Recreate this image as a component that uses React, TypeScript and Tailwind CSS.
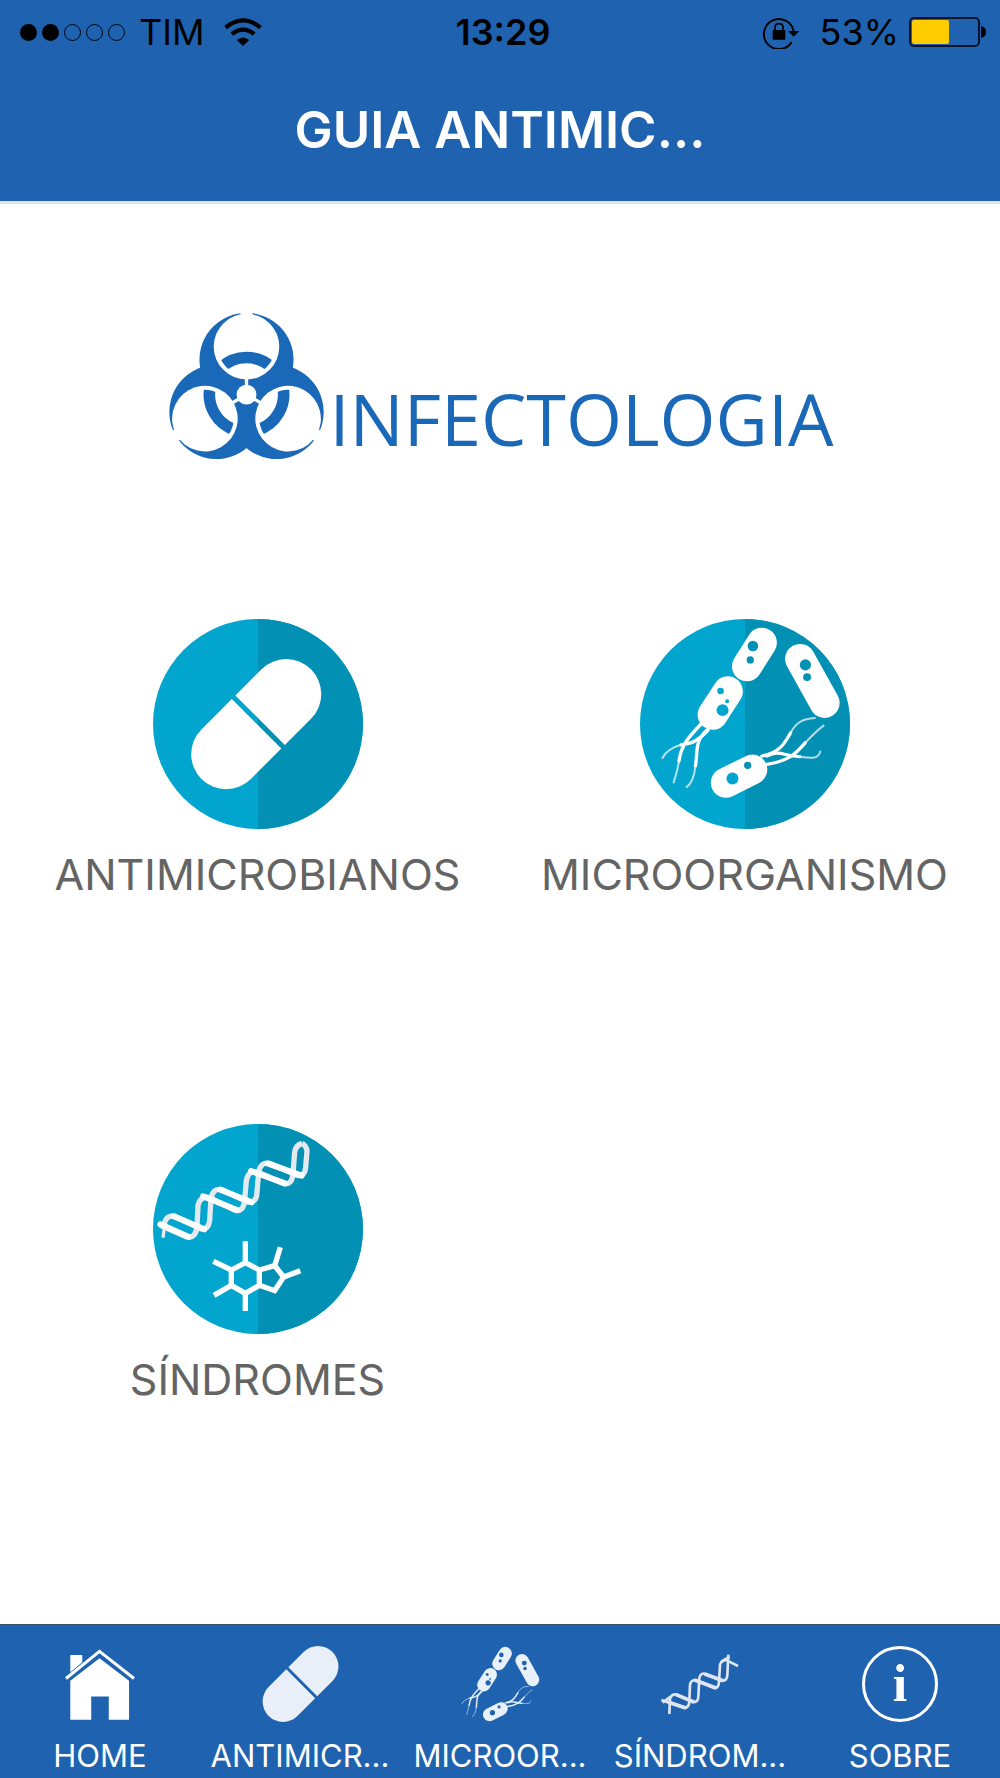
import type { ReactNode } from "react";

const CYAN_LIGHT = "#02a5cd";
const CYAN_DARK = "#0291b4";

function SignalDots() {
  return (
    <div className="flex gap-[5px]" role="img" aria-label="Sinal: 2 de 5">
      {[true, true, false, false, false].map((on, i) => (
        <span
          key={i}
          className={
            on
              ? "size-[17px] rounded-full bg-black"
              : "size-[17px] rounded-full border border-black"
          }
        />
      ))}
    </div>
  );
}

function WifiIcon() {
  return (
    <svg width="38" height="28" viewBox="669 51 116 85" aria-hidden="true">
      <g fill="none" stroke="#000" strokeWidth="13">
        <path d="M674 80 Q700 58 727 58 Q754 58 780 80" />
        <path d="M693 100 Q710 86 727 86 Q744 86 761 100" />
      </g>
      <path d="M727 136 L708 118 Q727 102 746 118 Z" />
    </svg>
  );
}

function RotationLockIcon() {
  return (
    <svg width="38" height="34" viewBox="297 43 112 102" aria-hidden="true">
      <path d="M385 124 A45 45 0 1 1 391 92" fill="none" stroke="#000" strokeWidth="6" />
      <path d="M374 91 H408 L391 108 Z" />
      <rect x="328" y="88" width="38" height="29" rx="2" />
      <path d="M335 90 V80 Q335 69 347 69 Q359 69 359 80 V90" fill="none" stroke="#000" strokeWidth="5" />
    </svg>
  );
}

function BatteryIcon() {
  return (
    <svg width="77" height="30" viewBox="0 0 77 30" aria-hidden="true">
      <rect x="1" y="1" width="69" height="28" rx="4" fill="none" stroke="#06142b" strokeWidth="2" />
      <rect x="3" y="3" width="37" height="24" rx="2" fill="#ffcc00" />
      <path d="M72 9 Q77 10 77 15 Q77 20 72 21 Z" />
    </svg>
  );
}

function StatusBar() {
  return (
    <div className="grid h-16 grid-cols-[1fr_auto_1fr] items-center pr-3.5 pl-5 text-4xl text-black">
      <div className="flex items-center gap-3.5">
        <SignalDots />
        <span>TIM</span>
        <span className="pl-1.5">
          <WifiIcon />
        </span>
      </div>
      <time className="font-semibold">13:29</time>
      <div className="flex items-center justify-end gap-2.5">
        <span className="pr-2.5">
          <RotationLockIcon />
        </span>
        <span>53%</span>
        <BatteryIcon />
      </div>
    </div>
  );
}

function BiohazardIcon() {
  const turns = [0, 120, 240];
  return (
    <svg width="157" height="148" viewBox="48 36 474 446" aria-hidden="true">
      <defs>
        <clipPath id="lobe">
          <circle cx="285" cy="140" r="87" />
        </clipPath>
      </defs>
      {turns.map((a) => (
        <circle key={a} cx="285" cy="180" r="142" fill="#1a68b8" transform={`rotate(${a} 285 285)`} />
      ))}
      {turns.map((a) => (
        <g key={a} transform={`rotate(${a} 285 285)`}>
          <circle cx="285" cy="140" r="99" fill="#fff" />
          <rect x="267" y="30" width="36" height="30" fill="#fff" />
          <rect x="280" y="230" width="10" height="40" fill="#fff" />
        </g>
      ))}
      <circle cx="285" cy="285" r="30" fill="#fff" />
      {turns.map((a) => (
        <g key={a} transform={`rotate(${a} 285 285)`}>
          <circle
            cx="285"
            cy="285"
            r="112"
            fill="none"
            stroke="#1a68b8"
            strokeWidth="35"
            clipPath="url(#lobe)"
          />
        </g>
      ))}
    </svg>
  );
}

function Disc({ viewBox, cx, cy, r, children }: { viewBox: string; cx: number; cy: number; r: number; children: ReactNode }) {
  return (
    <svg className="size-[210px]" viewBox={viewBox} aria-hidden="true">
      <circle cx={cx} cy={cy} r={r} fill={CYAN_LIGHT} />
      <path d={`M${cx} ${cy - r} A${r} ${r} 0 0 1 ${cx} ${cy + r} Z`} fill={CYAN_DARK} />
      {children}
    </svg>
  );
}

function PillShape({ fill }: { fill: string }) {
  return (
    <g transform="translate(348 343) rotate(-45)" fill={fill}>
      <path d="M16 -105 H127 A105 105 0 0 1 127 105 H16 Z" />
      <path d="M1 -105 H-128 A105 105 0 0 0 -128 105 H1 Z" />
    </g>
  );
}

function MicrobesShape({ fill, left, right }: { fill: string; left: string; right: string }) {
  return (
    <g>
      <g stroke={fill} strokeWidth="91" strokeLinecap="round">
        <path d="M425 97 L380 168" />
        <path d="M322 244 L276 315" />
        <path d="M541 146 L615 279" />
        <path d="M316 521 L396 481" />
      </g>
      <g stroke={fill} fill="none" strokeWidth="10" strokeLinecap="round">
        <path d="M244 340 C200 385 180 410 174 455" />
        <path d="M262 358 C220 395 232 420 224 470" />
        <path d="M262 362 C225 400 210 402 180 406" />
        <path d="M425 440 C480 430 495 400 512 370" />
        <path d="M436 466 C510 455 530 430 556 400" />
        <path d="M440 440 C480 420 490 440 540 442" />
      </g>
      <g stroke={fill} fill="none" strokeWidth="6" strokeLinecap="round" opacity="0.7">
        <path d="M174 455 C170 485 163 500 158 520" />
        <path d="M224 470 C220 505 212 525 197 534" />
        <path d="M180 406 C150 415 133 427 124 446" />
        <path d="M512 370 C530 335 550 328 586 325" />
        <path d="M556 400 C580 375 595 360 612 348" />
        <path d="M540 442 C580 448 596 448 602 426" />
      </g>
      <g fill={right}>
        <circle cx="398" cy="107" r="16" />
        <circle cx="390" cy="149" r="11" />
        <circle cx="557" cy="164" r="17" />
        <circle cx="562" cy="201" r="12" />
        <circle cx="382" cy="468" r="11" />
      </g>
      <g fill={left}>
        <circle cx="300" cy="243" r="10" />
        <circle cx="320" cy="274" r="6" />
        <circle cx="306" cy="301" r="18" />
        <circle cx="336" cy="508" r="18" />
      </g>
    </g>
  );
}

function PillDisc() {
  return (
    <Disc viewBox="38 28 630 630" cx={353} cy={343} r={315}>
      <PillShape fill="#fff" />
    </Disc>
  );
}

function MicrobesDisc() {
  return (
    <Disc viewBox="56 25 636 636" cx={374} cy={343} r={318}>
      <MicrobesShape fill="#fff" left={CYAN_LIGHT} right={CYAN_DARK} />
    </Disc>
  );
}

function DnaDisc() {
  return (
    <Disc viewBox="38 41 630 630" cx={353} cy={356} r={315}>
      <g fill="none" strokeLinejoin="round">
        <g stroke="#e2e9ef" strokeWidth="16">
          <path d="M60 345 L140 380 Q165 385 170 350 L173 285 Q180 255 208 262 L285 300 Q310 305 313 270 L318 210 Q325 178 352 185 L430 220 Q455 225 458 190 L463 125 Q466 105 485 99" />
          <path d="M72 340 Q78 312 105 318 L180 355 Q205 360 208 330 L212 265 Q218 232 245 238 L322 275 Q350 278 350 245 L355 185 Q362 152 390 160 L470 195 Q494 200 496 170 L500 122 Q499 108 485 99" />
          <path d="M74 336 L68 382" strokeWidth="10" />
        </g>
        <g stroke="#fff" strokeWidth="18" strokeLinecap="round">
          <path d="M60 342 L144 379" />
          <path d="M100 318 L192 357" />
          <path d="M188 258 L290 299" />
          <path d="M240 238 L334 276" />
          <path d="M332 182 L434 219" />
          <path d="M384 160 L484 196" />
        </g>
      </g>
      <g fill="none" stroke="#fff" strokeWidth="16">
        <path d="M315 457 L357 479 V525 L315 549 L273 525 V479 Z" />
        <path d="M357 479 L403 466 L430 500 L403 541 L357 525" />
        <path d="M315 457 V393 M315 549 V602 M273 479 L219 453 M273 525 L221 555 M403 466 L420 411 M430 500 L480 481" />
      </g>
    </Disc>
  );
}

function HomeIcon() {
  return (
    <svg width="70" height="71" viewBox="194 117 211 214" fill="#fff" aria-hidden="true">
      <path d="M210 213 L298 145 L387 213 V330 H326 V260 H273 V330 H210 Z" />
      <path d="M210 135 H246 V157 L210 187 Z" />
      <path d="M197 206 L298 124 L402 206" fill="none" stroke="#fff" strokeWidth="9" />
    </svg>
  );
}

function DnaTabIcon() {
  return (
    <svg width="80" height="64" viewBox="788 122 240 192" fill="none" stroke="#dfe6f1" strokeWidth="8" aria-hidden="true">
      <path d="M792 266 L860 290 Q875 290 876 270 L878 220 Q882 203 898 207 L950 230 Q964 232 965 212 L968 160 Q975 140 990 148 L1022 164" />
      <path d="M816 308 L818 262 Q824 245 840 250 L885 272 Q903 275 903 255 L906 200 Q910 183 926 188 L972 208 Q990 210 990 190 L993 130" />
      <path d="M796 274 L820 256 M970 154 L996 136" />
      <path d="M812 272 L866 290 M836 250 L890 272 M892 206 L956 230 M922 188 L978 208" strokeWidth="11" />
    </svg>
  );
}

function InfoIcon() {
  return (
    <span
      className="flex size-[76px] items-center justify-center rounded-full border-3 border-white font-['Liberation_Serif',serif] text-[52px] leading-none font-bold"
      aria-hidden="true"
    >
      i
    </span>
  );
}

const tiles = [
  { label: "ANTIMICROBIANOS", icon: <PillDisc /> },
  { label: "MICROORGANISMO", icon: <MicrobesDisc /> },
  { label: "SÍNDROMES", icon: <DnaDisc /> },
];

const tabs = [
  { label: "HOME", icon: <HomeIcon /> },
  {
    label: "ANTIMICR...",
    icon: (
      <svg width="77" height="76" viewBox="151 148 393 391" aria-hidden="true">
        <PillShape fill="#e8eff8" />
      </svg>
    ),
  },
  {
    label: "MICROOR...",
    icon: (
      <svg width="79" height="76" viewBox="118 48 548 522" aria-hidden="true">
        <MicrobesShape fill="#e8f0f9" left="#1f63b0" right="#1f63b0" />
      </svg>
    ),
  },
  { label: "SÍNDROM...", icon: <DnaTabIcon /> },
  { label: "SOBRE", icon: <InfoIcon /> },
];

export default function App() {
  return (
    <div className="flex min-h-screen flex-col bg-white font-['Inter',sans-serif]">
      <header className="border-b-3 border-[#e4e4e4] bg-[#1f63b0]">
        <StatusBar />
        <h1 className="flex h-[137px] items-center justify-center pb-1 text-[51px] font-semibold text-white">
          GUIA ANTIMIC...
        </h1>
      </header>

      <main className="flex-1 pt-[108px] pr-3 pl-3.5">
        <div className="flex justify-center gap-1">
          <BiohazardIcon />
          <span className="self-end font-['Open_Sans',sans-serif] text-[72px] leading-[84px] font-medium text-[#1a68b8]">
            INFECTOLOGIA
          </span>
        </div>

        <div className="mt-[159px] grid grid-cols-2 gap-y-[224px]">
          {tiles.map((t) => (
            <a key={t.label} href="#" className="flex flex-col items-center gap-[19px]">
              {t.icon}
              <span className="text-[43px] leading-[52px] text-[#646464]">{t.label}</span>
            </a>
          ))}
        </div>
      </main>

      <nav className="grid grid-cols-5 border-t border-[#33536b] bg-[#1f63b0] pt-[21px] pb-1 text-white">
        {tabs.map((t) => (
          <a key={t.label} href="#" className="flex flex-col items-center gap-4">
            <span className="flex h-[76px] items-center">{t.icon}</span>
            <span className="text-[31px] leading-9">{t.label}</span>
          </a>
        ))}
      </nav>
    </div>
  );
}
